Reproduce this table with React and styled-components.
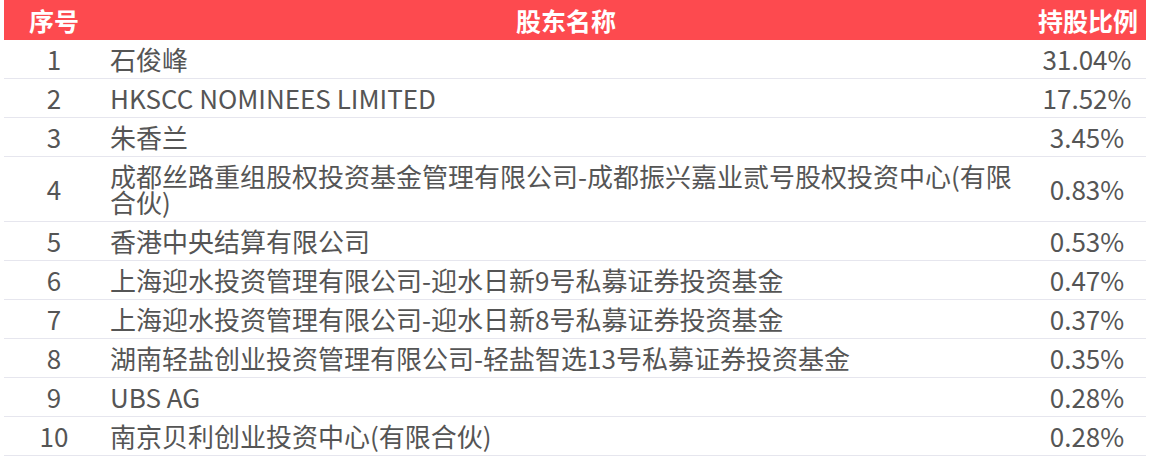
import styled, { createGlobalStyle } from "styled-components";

const GlobalStyle = createGlobalStyle`
    body {
        margin: 0;
        background: #ffffff;
        font-family: "Noto Sans CJK SC", "Noto Sans", sans-serif;
    }
`;

const holders = [
    { id: 1, name: "石俊峰", ratio: "31.04%" },
    { id: 2, name: "HKSCC NOMINEES LIMITED", ratio: "17.52%" },
    { id: 3, name: "朱香兰", ratio: "3.45%" },
    {
        id: 4,
        name: "成都丝路重组股权投资基金管理有限公司-成都振兴嘉业贰号股权投资中心(有限合伙)",
        ratio: "0.83%",
    },
    { id: 5, name: "香港中央结算有限公司", ratio: "0.53%" },
    { id: 6, name: "上海迎水投资管理有限公司-迎水日新9号私募证券投资基金", ratio: "0.47%" },
    { id: 7, name: "上海迎水投资管理有限公司-迎水日新8号私募证券投资基金", ratio: "0.37%" },
    { id: 8, name: "湖南轻盐创业投资管理有限公司-轻盐智选13号私募证券投资基金", ratio: "0.35%" },
    { id: 9, name: "UBS AG", ratio: "0.28%" },
    { id: 10, name: "南京贝利创业投资中心(有限合伙)", ratio: "0.28%" },
];

export default function App() {
    return (
        <>
            <GlobalStyle />
            <Page>
                <Table>
                    <thead>
                        <tr>
                            <HeadCell $align="center">序号</HeadCell>
                            <HeadCell $align="center">股东名称</HeadCell>
                            <HeadCell $align="right">持股比例</HeadCell>
                        </tr>
                    </thead>
                    <tbody>
                        {holders.map((h) => (
                            <Row key={h.id}>
                                <NumCell>{h.id}</NumCell>
                                <NameCell>{h.name}</NameCell>
                                <RatioCell>{h.ratio}</RatioCell>
                            </Row>
                        ))}
                    </tbody>
                </Table>
            </Page>
        </>
    );
}

const Page = styled.div`
    width: 1150px;
    height: 456px;
    padding: 0 4px;
    box-sizing: border-box;
    overflow: hidden;
`;

const Table = styled.table`
    width: 1142px;
    border-collapse: collapse;
    table-layout: fixed;
    font-size: 26px;
    color: #555555;

    th:nth-child(1) {
        width: 100px;
    }
    th:nth-child(3) {
        width: 110px;
    }
`;

const HeadCell = styled.th`
    height: 40px;
    padding: 0;
    background: #fd4a4f;
    color: #ffffff;
    font-weight: 700;
    font-size: 25px;
    line-height: 40px;
    text-align: ${(p) => p.$align};
    &:last-child {
        padding-right: 8px;
    }
`;

const Row = styled.tr`
    border-bottom: 1px solid #e6e6ee;
`;

const Cell = styled.td`
    padding: 6px 0;
    line-height: 26px;
    vertical-align: middle;
`;

const NumCell = styled(Cell)`
    text-align: center;
`;

const NameCell = styled(Cell)`
    padding-left: 6px;
    padding-right: 6px;
`;

const RatioCell = styled(Cell)`
    text-align: center;
`;
